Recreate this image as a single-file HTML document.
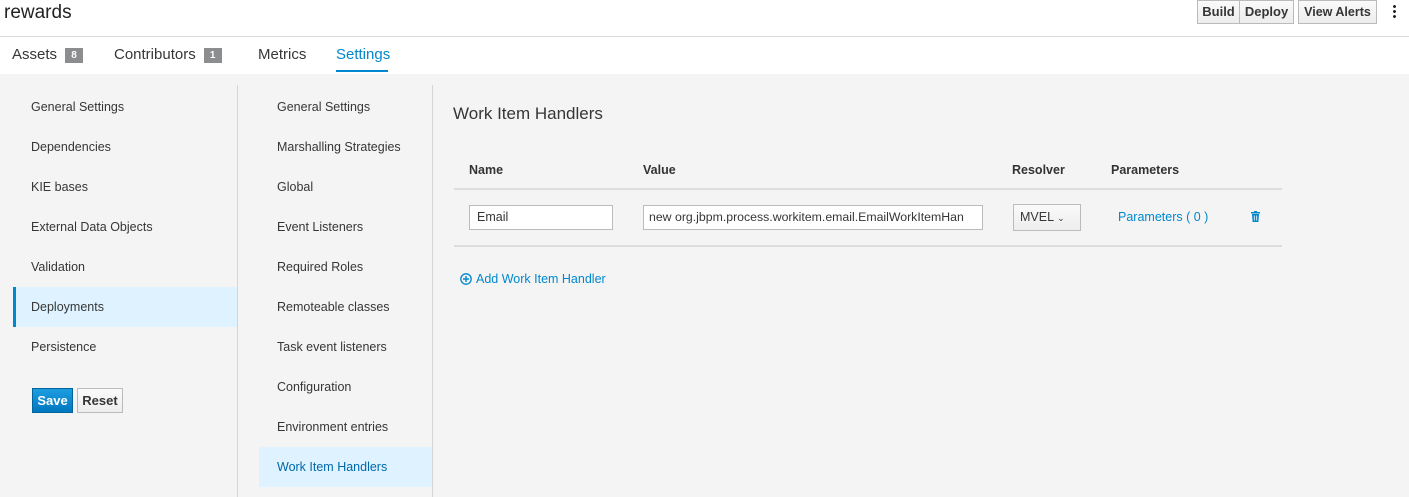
<!DOCTYPE html>
<html><head><style>
*{box-sizing:border-box;margin:0;padding:0}
body{width:1409px;height:497px;overflow:hidden;background:#f4f4f4;font-family:"Liberation Sans",sans-serif;color:#363636;position:relative}
.abs{position:absolute}
.hdr{left:0;top:0;width:1409px;height:74px;background:#fff}
.line{background:#d9d9d9}
.nav{font-size:12.5px;color:#363636}
.btn{position:absolute;background:linear-gradient(#fafafa,#ededed);border:1px solid #bbb;font-size:13px;color:#363636;text-align:center;font-weight:bold}
.inp{position:absolute;background:#fff;border:1px solid #bbb;font-size:12.5px;padding-left:7px;line-height:22px;white-space:nowrap;overflow:hidden}
.badge{display:inline-block;background:#8b8d8f;color:#fff;font-size:10px;font-weight:bold;width:18px;height:15px;line-height:15px;text-align:center;vertical-align:1px;margin-left:8px}
.th{position:absolute;top:163px;font-size:12.5px;font-weight:bold;color:#333}
</style></head><body>
<div class="abs hdr"></div>
<div class="abs" style="left:4px;top:2px;font-size:19px;color:#222">rewards</div>
<div class="abs line" style="left:0;top:36px;width:1409px;height:1px"></div>
<div class="btn" style="left:1197px;top:0;width:43px;height:24px;line-height:22px">Build</div>
<div class="btn" style="left:1239px;top:0;width:55px;height:24px;line-height:22px">Deploy</div>
<div class="btn" style="left:1298px;top:0;width:79px;height:24px;line-height:22px;font-size:12.5px">View Alerts</div>
<div class="abs" style="left:1393px;top:4px;width:3px;height:14px;background:radial-gradient(circle,#222 1.3px,transparent 1.6px) 0 0/3px 5px"></div>
<div class="abs" style="left:12px;top:46px;font-size:15px;color:#363636">Assets<span class="badge">8</span></div>
<div class="abs" style="left:114px;top:46px;font-size:15px;color:#363636">Contributors<span class="badge">1</span></div>
<div class="abs" style="left:258px;top:46px;font-size:15px;color:#363636">Metrics</div>
<div class="abs" style="left:336px;top:46px;font-size:15px;color:#0088ce">Settings</div>
<div class="abs" style="left:336px;top:70px;width:52px;height:2px;background:#0088ce"></div>

<div class="abs line" style="left:237px;top:85px;width:1px;height:412px;background:#d5d5d5"></div>
<div class="abs line" style="left:432px;top:85px;width:1px;height:412px;background:#d5d5d5"></div>
<div class="abs" style="left:13px;top:287px;width:224px;height:40px;background:#def3ff;border-left:3px solid #0088ce"></div>
<div class="abs" style="left:259px;top:447px;width:173px;height:40px;background:#def3ff"></div>
<div class="abs nav" style="left:31px;top:87px;line-height:40px">General Settings<br>Dependencies<br>KIE bases<br>External Data Objects<br>Validation<br>Deployments<br>Persistence</div>
<div class="abs nav" style="left:277px;top:87px;line-height:40px">General Settings<br>Marshalling Strategies<br>Global<br>Event Listeners<br>Required Roles<br>Remoteable classes<br>Task event listeners<br>Configuration<br>Environment entries<br><span style="color:#0066aa">Work Item Handlers</span></div>
<div class="btn" style="left:32px;top:388px;width:41px;height:25px;line-height:23px;background:linear-gradient(#1e9de0,#0077c0);border-color:#00659c;color:#fff">Save</div>
<div class="btn" style="left:77px;top:388px;width:46px;height:25px;line-height:23px">Reset</div>

<div class="abs" style="left:453px;top:104px;font-size:17px;color:#363636">Work Item Handlers</div>
<div class="th" style="left:469px">Name</div>
<div class="th" style="left:643px">Value</div>
<div class="th" style="left:1012px">Resolver</div>
<div class="th" style="left:1111px">Parameters</div>
<div class="abs" style="left:454px;top:188px;width:828px;height:2px;background:#ddd"></div>
<div class="inp" style="left:469px;top:205px;width:144px;height:25px">Email</div>
<div class="inp" style="left:643px;top:205px;width:340px;height:25px;padding-left:5px;font-size:12.3px">new org.jbpm.process.workitem.email.EmailWorkItemHan</div>
<div class="btn" style="left:1013px;top:204px;width:68px;height:27px;line-height:25px;font-weight:normal;text-align:left;padding-left:6px;font-size:12.5px">MVEL <span style="font-size:9px">&#8964;</span></div>
<div class="abs" style="left:1118px;top:210px;font-size:12.5px;color:#0088ce">Parameters ( 0 )</div>
<svg class="abs" style="left:1251px;top:211px" width="9" height="11" viewBox="0 0 9 11"><rect x="0" y="1" width="9" height="1.5" fill="#0088ce"/><rect x="3" y="0" width="3" height="1.5" fill="#0088ce"/><path d="M1 3h7l-.6 8h-5.8z" fill="#0088ce"/><path d="M3.3 4.5v5M5.7 4.5v5" stroke="#fff" stroke-width=".8"/></svg>
<div class="abs" style="left:454px;top:245px;width:828px;height:2px;background:#ddd"></div>
<svg class="abs" style="left:460px;top:273px" width="12" height="12" viewBox="0 0 12 12"><circle cx="6" cy="6" r="5.2" fill="none" stroke="#0088ce" stroke-width="1.3"/><path d="M6 3v6M3 6h6" stroke="#0088ce" stroke-width="1.4"/></svg>
<div class="abs" style="left:476px;top:272px;font-size:12.5px;color:#0088ce">Add Work Item Handler</div>
</body></html>
